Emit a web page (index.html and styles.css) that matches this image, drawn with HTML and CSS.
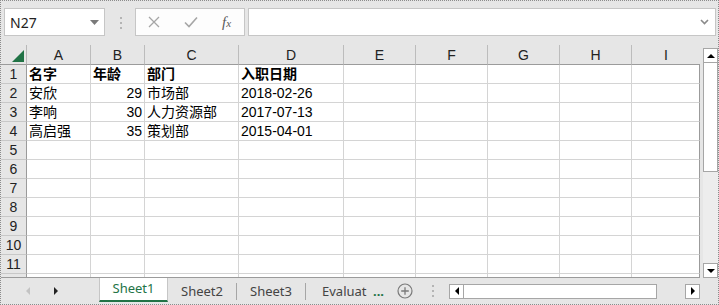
FILE: index.html
```html
<!DOCTYPE html>
<html lang="zh">
	<head>
		<meta charset="utf-8" />
		<title>Sheet1</title>
		<link rel="stylesheet" href="styles.css">
	</head>
	<body>
		<div class="app">
			<div class="formula-bar">
				<div class="name-box">
					<span>N27</span>
					<svg width="9" height="5" viewBox="0 0 9 5"><path d="M0 0h9L4.5 5z" fill="#7a7a7a"/></svg>
				</div>
				<svg class="grip" width="2" height="12" viewBox="0 0 2 12"><rect y="0" width="2" height="2"/><rect y="5" width="2" height="2"/><rect y="10" width="2" height="2"/></svg>
				<div class="fx-buttons">
					<svg width="12" height="12" viewBox="0 0 12 12"><path d="M1 1l10 10M11 1L1 11" stroke="#a6a6a6" stroke-width="1.3" fill="none"/></svg>
					<svg width="14" height="12" viewBox="0 0 14 12"><path d="M1 6.5l4 4L13 1.5" stroke="#a6a6a6" stroke-width="1.6" fill="none"/></svg>
					<span class="fx">f<small>x</small></span>
				</div>
				<div class="formula-input">
					<svg width="9" height="6" viewBox="0 0 9 6"><path d="M1 1l3.5 3.5L8 1" stroke="#8a8a8a" stroke-width="1.6" fill="none"/></svg>
				</div>
			</div>

			<div class="sheet-area">
				<div class="grid-wrap">
					<div class="grid">
						<div class="corner"><svg width="12" height="12" viewBox="0 0 12 12"><path d="M12 0V12H0z" fill="#217346"/></svg></div>
						<div class="col-head">A</div><div class="col-head">B</div><div class="col-head">C</div><div class="col-head">D</div><div class="col-head">E</div><div class="col-head">F</div><div class="col-head">G</div><div class="col-head">H</div><div class="col-head last">I</div>

						<div class="row-head">1</div><div class="cell b">名字</div><div class="cell b">年龄</div><div class="cell b">部门</div><div class="cell b">入职日期</div><div class="cell"></div><div class="cell"></div><div class="cell"></div><div class="cell"></div><div class="cell last"></div>
						<div class="row-head">2</div><div class="cell">安欣</div><div class="cell num">29</div><div class="cell">市场部</div><div class="cell">2018-02-26</div><div class="cell"></div><div class="cell"></div><div class="cell"></div><div class="cell"></div><div class="cell last"></div>
						<div class="row-head">3</div><div class="cell">李响</div><div class="cell num">30</div><div class="cell">人力资源部</div><div class="cell">2017-07-13</div><div class="cell"></div><div class="cell"></div><div class="cell"></div><div class="cell"></div><div class="cell last"></div>
						<div class="row-head">4</div><div class="cell">高启强</div><div class="cell num">35</div><div class="cell">策划部</div><div class="cell">2015-04-01</div><div class="cell"></div><div class="cell"></div><div class="cell"></div><div class="cell"></div><div class="cell last"></div>
						<div class="row-head">5</div><div class="cell"></div><div class="cell"></div><div class="cell"></div><div class="cell"></div><div class="cell"></div><div class="cell"></div><div class="cell"></div><div class="cell"></div><div class="cell last"></div>
						<div class="row-head">6</div><div class="cell"></div><div class="cell"></div><div class="cell"></div><div class="cell"></div><div class="cell"></div><div class="cell"></div><div class="cell"></div><div class="cell"></div><div class="cell last"></div>
						<div class="row-head">7</div><div class="cell"></div><div class="cell"></div><div class="cell"></div><div class="cell"></div><div class="cell"></div><div class="cell"></div><div class="cell"></div><div class="cell"></div><div class="cell last"></div>
						<div class="row-head">8</div><div class="cell"></div><div class="cell"></div><div class="cell"></div><div class="cell"></div><div class="cell"></div><div class="cell"></div><div class="cell"></div><div class="cell"></div><div class="cell last"></div>
						<div class="row-head">9</div><div class="cell"></div><div class="cell"></div><div class="cell"></div><div class="cell"></div><div class="cell"></div><div class="cell"></div><div class="cell"></div><div class="cell"></div><div class="cell last"></div>
						<div class="row-head">10</div><div class="cell"></div><div class="cell"></div><div class="cell"></div><div class="cell"></div><div class="cell"></div><div class="cell"></div><div class="cell"></div><div class="cell"></div><div class="cell last"></div>
						<div class="row-head">11</div><div class="cell"></div><div class="cell"></div><div class="cell"></div><div class="cell"></div><div class="cell"></div><div class="cell"></div><div class="cell"></div><div class="cell"></div><div class="cell last"></div>
						<div class="row-head"></div><div class="cell"></div><div class="cell"></div><div class="cell"></div><div class="cell"></div><div class="cell"></div><div class="cell"></div><div class="cell"></div><div class="cell"></div><div class="cell last"></div>
					</div>
				</div>
				<div class="vscroll">
					<div class="sb-btn"><svg width="8" height="4" viewBox="0 0 8 4"><path d="M0 4h8L4 0z"/></svg></div>
					<div class="sb-thumb"></div>
					<div class="sb-track"></div>
					<div class="sb-btn"><svg width="8" height="4" viewBox="0 0 8 4"><path d="M0 0h8L4 4z"/></svg></div>
				</div>
			</div>

			<div class="tab-bar">
				<div class="tab-nav">
					<svg width="4" height="8" viewBox="0 0 4 8"><path d="M4 0v8L0 4z" fill="#c3c3c3"/></svg>
					<svg width="4" height="8" viewBox="0 0 4 8"><path d="M0 0v8l4-4z" fill="#222"/></svg>
				</div>
				<div class="tab active">Sheet1</div>
				<div class="tab">Sheet2</div><i class="sep"></i>
				<div class="tab">Sheet3</div><i class="sep"></i>
				<div class="tab short">Evaluat</div>
				<span class="more">...</span>
				<svg class="add" width="16" height="16" viewBox="0 0 16 16"><circle cx="8" cy="8" r="7" stroke="#7a7a7a" stroke-width="1.2" fill="none"/><path d="M8 4.2v7.6M4.2 8h7.6" stroke="#7a7a7a" stroke-width="1.3"/></svg>
				<svg class="grip" width="2" height="12" viewBox="0 0 2 12"><rect y="0" width="2" height="2"/><rect y="5" width="2" height="2"/><rect y="10" width="2" height="2"/></svg>
				<div class="hscroll">
					<div class="hs-btn"><svg width="4" height="8" viewBox="0 0 4 8"><path d="M4 0v8L0 4z"/></svg></div>
					<div class="hs-thumb"></div>
					<div class="hs-track"></div>
					<div class="hs-btn"><svg width="4" height="8" viewBox="0 0 4 8"><path d="M0 0v8l4-4z"/></svg></div>
				</div>
			</div>
		</div>
	</body>
</html>
```

FILE: styles.css
```css
* {
	box-sizing: border-box;
	margin: 0;
	padding: 0;
}

body {
	width: 719px;
	height: 305px;
	overflow: hidden;
	font-family: "Liberation Sans", "Noto Sans CJK SC", sans-serif;
}

.app {
	width: 719px;
	height: 305px;
	border: 1px dotted #8c8c8c;
	background: #e6e6e6;
	display: flex;
	flex-direction: column;
}

/* formula bar */
.formula-bar {
	height: 44px;
	flex: none;
	display: flex;
	align-items: flex-start;
	padding: 7px 2px 0 3px;
}

.name-box {
	width: 101px;
	height: 28px;
	background: #fff;
	border: 1px solid #c6c6c6;
	display: flex;
	align-items: center;
	justify-content: space-between;
	padding: 0 5px 0 5px;
	font: 14px "Noto Sans", sans-serif;
	color: #222;
}

.grip {
	flex: none;
	fill: #b4b4b4;
}

.formula-bar .grip {
	margin: 9px 13px 0 15px;
}

.fx-buttons {
	width: 110px;
	height: 28px;
	background: #fdfdfd;
	border: 1px solid #c6c6c6;
	display: flex;
	align-items: center;
	padding-left: 12px;
	gap: 24px;
}

.fx {
	font: italic 15px "Liberation Serif", serif;
	color: #5a5a5a;
	margin-left: 0;
}

.fx small {
	font-size: 11px;
}

.formula-input {
	flex: 1;
	height: 28px;
	margin-left: 3px;
	background: #fff;
	border: 1px solid #c6c6c6;
	display: flex;
	align-items: center;
	justify-content: flex-end;
	padding-right: 6px;
}

/* sheet */
.sheet-area {
	height: 233px;
	flex: none;
	display: flex;
}

.grid-wrap {
	width: 699px;
	height: 233px;
	overflow: hidden;
	border-bottom: 1px solid #9b9b9b;
}

.grid {
	display: grid;
	grid-template-columns: 26px 64px 54px 94px 105px 72px 72px 72px 72px 68px;
	grid-template-rows: 20px repeat(12, 19px);
}

.corner {
	background: #e6e6e6;
	border-right: 1px solid #b8b8b8;
	border-bottom: 1px solid #9b9b9b;
	display: flex;
	justify-content: flex-end;
	align-items: flex-end;
	padding: 0 2px 2px 0;
}

.col-head {
	background: #e6e6e6;
	border-right: 1px solid #bcbcbc;
	border-bottom: 1px solid #9b9b9b;
	text-align: center;
	font-size: 14px;
	line-height: 20px;
	color: #222;
}

.col-head.last {
	border-right: none;
}

.row-head {
	background: #e6e6e6;
	border-right: 1px solid #9b9b9b;
	border-bottom: 1px solid #c8c8c8;
	text-align: center;
	font-size: 14px;
	line-height: 18px;
	color: #222;
}

.cell {
	background: #fff;
	border-right: 1px solid #d4d4d4;
	border-bottom: 1px solid #d4d4d4;
	font-size: 14px;
	line-height: 18px;
	padding: 0 2px;
	white-space: nowrap;
	color: #000;
}

.cell.last {
	border-right-color: #9b9b9b;
}

.cell.b {
	font-weight: bold;
}

.cell.num {
	text-align: right;
}

/* vertical scrollbar */
.vscroll {
	width: 15px;
	margin-left: 3px;
	padding-top: 3px;
	display: flex;
	flex-direction: column;
}

.sb-btn {
	height: 15px;
	flex: none;
	background: #fff;
	border: 1px solid #a6a6a6;
	display: flex;
	align-items: center;
	justify-content: center;
}

.sb-thumb {
	height: 109px;
	flex: none;
	background: #fff;
	border: 1px solid #a6a6a6;
	border-top: none;
}

.sb-track {
	flex: 1;
	background: #ededed;
}

/* sheet tabs */
.tab-bar {
	flex: 1;
	display: flex;
	align-items: center;
	font: 13px "Noto Sans", sans-serif;
	color: #444;
}

.tab-nav {
	width: 98px;
	height: 100%;
	display: flex;
	align-items: center;
	padding-left: 25px;
	gap: 24px;
}

.tab {
	width: 68px;
	flex: none;
	text-align: center;
	white-space: nowrap;
	line-height: 24px;
}

.tab.active {
	width: 69px;
	align-self: flex-start;
	height: 24px;
	background: #fff;
	border-left: 1px solid #c6c6c6;
	border-right: 1px solid #c6c6c6;
	border-bottom: 2px solid #217346;
	color: #217346;
	line-height: 21px;
}

.tab.short {
	width: 62px;
	text-align: left;
	padding-left: 16px;
}

.sep {
	width: 1px;
	flex: none;
	height: 17px;
	background: #a6a6a6;
}

.more {
	width: 12px;
	flex: none;
	color: #217346;
	font-weight: bold;
	margin: 0 12px 0 5px;
	line-height: 14px;
}

.add {
	flex: none;
}

.tab-bar .grip {
	margin: 0 15px 0 19px;
}

.hscroll {
	width: 251px;
	flex: none;
	height: 15px;
	display: flex;
}

.hs-btn {
	width: 15px;
	background: #fff;
	border: 1px solid #a6a6a6;
	display: flex;
	align-items: center;
	justify-content: center;
}

.hs-thumb {
	width: 193px;
	background: #fff;
	border: 1px solid #a6a6a6;
	border-left: none;
}

.hs-track {
	flex: 1;
}
```
